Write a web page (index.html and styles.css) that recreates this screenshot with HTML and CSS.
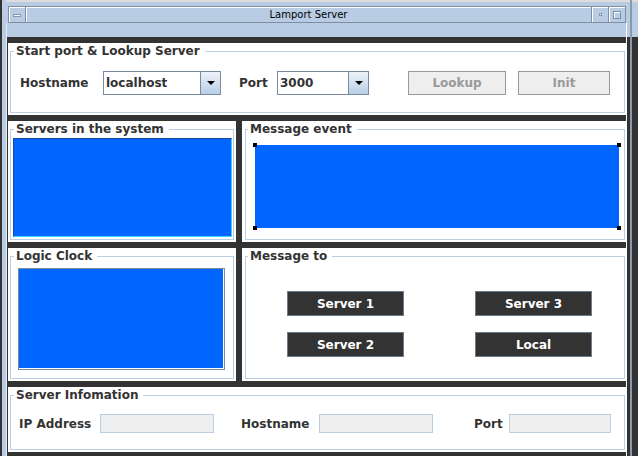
FILE: index.html
```html
<!DOCTYPE html>
<html>
<head>
<meta charset="utf-8">
<title>Lamport Server</title>
<link rel="stylesheet" href="styles.css">
</head>
<body>
<div class="window">
  <div class="titlebar">
    <div class="tb-btn tb-min"><span class="dash"></span></div>
    <div class="tb-title">Lamport Server</div>
    <div class="tb-btn tb-icon"><span class="dot"></span></div>
    <div class="tb-btn tb-max"><span class="sq"></span></div>
  </div>
  <div class="frame">
    <div class="lstrip"></div>
    <div class="inner">
      <div class="menubar"></div>
      <div class="panels">
        <div class="panel span2">
          <fieldset class="tb tb-wide">
            <legend>Start port &amp; Lookup Server</legend>
            <div class="start-row">
              <span class="lbl w-host">Hostname</span>
              <div class="combo w-combo1">
                <span class="val">localhost</span>
                <span class="arrow"><span class="tri"></span></span>
              </div>
              <span class="lbl w-port">Port</span>
              <div class="combo w-combo2">
                <span class="val">3000</span>
                <span class="arrow"><span class="tri"></span></span>
              </div>
              <div class="dbtn w-lookup">Lookup</div>
              <div class="dbtn w-init">Init</div>
            </div>
          </fieldset>
        </div>
        <div class="panel">
          <fieldset class="tb tb-left">
            <legend>Servers in the system</legend>
            <div class="list"></div>
          </fieldset>
        </div>
        <div class="panel">
          <fieldset class="tb tb-right">
            <legend>Message event</legend>
            <div class="msg-area">
              <span class="handle h-tl"></span>
              <span class="handle h-tr"></span>
              <span class="handle h-bl"></span>
              <span class="handle h-br"></span>
            </div>
          </fieldset>
        </div>
        <div class="panel">
          <fieldset class="tb tb-left">
            <legend>Logic Clock</legend>
            <div class="clock"></div>
          </fieldset>
        </div>
        <div class="panel">
          <fieldset class="tb tb-right">
            <legend>Message to</legend>
            <div class="btn-grid">
              <div class="dark-btn">Server 1</div>
              <div class="dark-btn">Server 3</div>
              <div class="dark-btn">Server 2</div>
              <div class="dark-btn">Local</div>
            </div>
          </fieldset>
        </div>
        <div class="panel span2">
          <fieldset class="tb tb-wide">
            <legend>Server Infomation</legend>
            <div class="info-row">
              <span class="lbl w-ip">IP Address</span>
              <div class="field w-f1"></div>
              <span class="lbl w-host2">Hostname</span>
              <div class="field w-f2"></div>
              <span class="lbl w-port2">Port</span>
              <div class="field w-f3"></div>
            </div>
          </fieldset>
        </div>
      </div>
    </div>
    <div class="rstrip"></div>
  </div>
</div>
</body>
</html>
```
FILE: styles.css
```css
* { box-sizing: border-box; }
html, body { margin: 0; padding: 0; }
body {
  width: 638px;
  height: 456px;
  overflow: hidden;
  background: #333;
  font-family: "DejaVu Sans", "Liberation Sans", sans-serif;
}
.window {
  width: 638px;
  height: 456px;
  display: flex;
  flex-direction: column;
  background:
    linear-gradient(to right, #333 0 2px, transparent 2px),
    linear-gradient(to right, transparent 630px, #8d99a9 630px 632px, transparent 632px),
    linear-gradient(to right, transparent 2px, #b8cde4 2px 6px, transparent 6px),
    linear-gradient(to bottom, #dcdcdc 0 2px, #b8cde4 2px 37px, #333 37px);
}

/* title bar */
.titlebar {
  margin: 6px 0 0 8px;
  width: 618px;
  height: 17px;
  border: 1px solid #7e8ea2;
  display: flex;
  background: #b8cde4;
}
.tb-btn {
  width: 17px;
  display: flex;
  align-items: center;
  justify-content: center;
  box-shadow: inset 1px 1px 0 #fff;
}
.tb-min { border-right: 1px solid #7e8ea2; }
.tb-icon, .tb-max { border-left: 1px solid #7e8ea2; }
.tb-title {
  flex: 1;
  box-shadow: inset 1px 1px 0 #fff;
  text-align: center;
  font-size: 10px;
  line-height: 16px;
  color: #000;
}
.dash {
  width: 8px;
  height: 3px;
  background: #fff;
  border: 1px solid #8796aa;
  margin-top: 1px;
}
.dot {
  width: 3px;
  height: 3px;
  background: #fff;
  border: 1px solid #8796aa;
  margin-left: 1px;
}
.sq {
  width: 8px;
  height: 8px;
  border: 1px solid #7e8ea2;
  box-shadow: inset 1px 1px 0 #fff;
}

/* frame */
.frame {
  display: flex;
  height: 433px;
}
.lstrip {
  width: 7px;
  box-shadow: inset -1px 0 0 #e4ebf3;
}
.inner {
  width: 619px;
  display: flex;
  flex-direction: column;
}
.menubar {
  height: 14px;
  background: #b8cde4;
}
.rstrip {
  width: 12px;
  border-left: 1px solid #fff;
}
.panels {
  flex: 1;
  background: #333;
  padding: 6px 0 4px 1px;
  display: grid;
  grid-template-columns: 228px 384px;
  grid-template-rows: 72px 121px 133px 65px;
  gap: 6px;
}
.panel {
  background: #fff;
  display: flex;
}
.span2 { grid-column: 1 / 3; }

fieldset.tb {
  flex: 1;
  min-width: 0;
  border: 1px solid #b8cfe5;
  padding: 0;
}
.tb-wide { margin: 1px 1px 2px 2px; }
.tb-left { margin: 1px 2px 2px 2px; }
.tb-right { margin: 1px 1px 2px 3px; }
legend {
  margin-left: 3px;
  padding: 0 5px 0 2px;
  font-weight: bold;
  font-size: 12px;
  line-height: 14px;
  color: #333;
}
.tb-right legend { margin-left: 2px; }

.lbl {
  font-weight: bold;
  font-size: 12px;
  color: #333;
  white-space: nowrap;
}

/* start row */
.start-row {
  display: flex;
  align-items: center;
  margin-top: 13px;
  padding-left: 9px;
}
.w-host { width: 83px; }
.w-port { width: 38px; margin-left: 18px; }
.combo {
  display: flex;
  height: 24px;
  border: 1px solid #7a8aa0;
  background: #fff;
}
.w-combo1 { width: 118px; }
.w-combo2 { width: 92px; }
.combo .val {
  flex: 1;
  padding: 0 0 1px 2px;
  display: flex;
  align-items: center;
  font-weight: bold;
  font-size: 12px;
  color: #333;
}
.combo .arrow {
  width: 20px;
  border-left: 1px solid #7a8aa0;
  background: linear-gradient(#eef3f9, #b8cfe5);
  display: flex;
  align-items: center;
  justify-content: center;
}
.tri {
  width: 0;
  height: 0;
  border-left: 4px solid transparent;
  border-right: 4px solid transparent;
  border-top: 4px solid #000;
}
.dbtn {
  height: 24px;
  border: 1px solid #999;
  background: #eee;
  color: #999;
  font-weight: bold;
  font-size: 12px;
  display: flex;
  align-items: center;
  justify-content: center;
}
.w-lookup { width: 98px; margin-left: 39px; }
.w-init { width: 92px; margin-left: 12px; }

/* servers list */
.list {
  margin: 2px 0 0 2px;
  width: 219px;
  height: 99px;
  background: #0066ff;
  border-top: 1px solid #1b4a9a;
  border-left: 1px solid #1b4a9a;
  border-right: 1px solid #3cd2ff;
  border-bottom: 1px solid #3cd2ff;
}

/* message event */
.msg-area {
  position: relative;
  margin: 9px 0 0 9px;
  width: 364px;
  height: 83px;
  background: #0066ff;
}
.handle {
  position: absolute;
  width: 4px;
  height: 4px;
  background: #000;
}
.h-tl { left: -2px; top: -2px; }
.h-tr { right: -2px; top: -2px; }
.h-bl { left: -2px; bottom: -2px; }
.h-br { right: -2px; bottom: -2px; }

/* logic clock */
.clock {
  margin: 5px 0 0 7px;
  width: 207px;
  height: 102px;
  background: #0066ff;
  border: 1px solid #7d8c9b;
  box-shadow: inset -1px -1px 0 #fff;
}

/* message to */
.btn-grid {
  display: grid;
  grid-template-columns: 117px 117px;
  column-gap: 71px;
  row-gap: 16px;
  margin: 28px 0 0 41px;
}
.dark-btn {
  height: 25px;
  background: #333;
  border: 1px solid #6e7d8d;
  color: #fff;
  font-weight: bold;
  font-size: 12px;
  display: flex;
  align-items: center;
  justify-content: center;
}

/* server info */
.info-row {
  display: flex;
  align-items: center;
  margin-top: 12px;
  padding-left: 8px;
}
.w-ip { width: 81px; }
.w-host2 { width: 78px; margin-left: 27px; }
.w-port2 { width: 35px; margin-left: 41px; }
.field {
  height: 19px;
  background: #eee;
  border: 1px solid #b8cfe5;
}
.w-f1 { width: 114px; }
.w-f2 { width: 114px; }
.w-f3 { width: 102px; }
```
